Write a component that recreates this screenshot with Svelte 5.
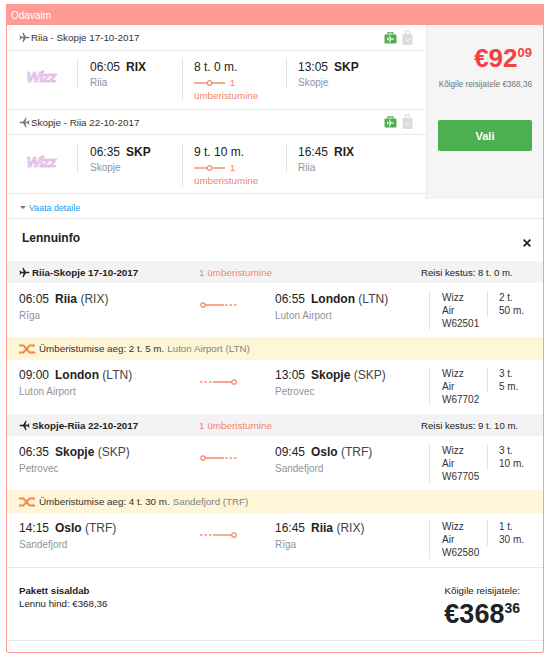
<script>
  const routes = [
    { title: 'Riia - Skopje 17-10-2017', back: false, dep: '06:05', from: 'RIX', fromCity: 'Riia', dur: '8 t. 0 m.', arr: '13:05', to: 'SKP', toCity: 'Skopje' },
    { title: 'Skopje - Riia 22-10-2017', back: true, dep: '06:35', from: 'SKP', fromCity: 'Skopje', dur: '9 t. 10 m.', arr: '16:45', to: 'RIX', toCity: 'Riia' }
  ];

  const trips = [
    {
      title: 'Riia-Skopje 17-10-2017', back: false, total: '8 t. 0 m.',
      legs: [
        { dep: '06:05', from: 'Riia', fromCode: 'RIX', fromPlace: 'Rīga', arr: '06:55', to: 'London', toCode: 'LTN', toPlace: 'Luton Airport', flight: 'W62501', h: '2 t.', m: '50 m.' },
        { dep: '09:00', from: 'London', fromCode: 'LTN', fromPlace: 'Luton Airport', arr: '13:05', to: 'Skopje', toCode: 'SKP', toPlace: 'Petrovec', flight: 'W67702', h: '3 t.', m: '5 m.' }
      ],
      wait: 'Ümberistumise aeg: 2 t. 5 m.', waitPlace: 'Luton Airport (LTN)'
    },
    {
      title: 'Skopje-Riia 22-10-2017', back: true, total: '9 t. 10 m.',
      legs: [
        { dep: '06:35', from: 'Skopje', fromCode: 'SKP', fromPlace: 'Petrovec', arr: '09:45', to: 'Oslo', toCode: 'TRF', toPlace: 'Sandefjord', flight: 'W67705', h: '3 t.', m: '10 m.' },
        { dep: '14:15', from: 'Oslo', fromCode: 'TRF', fromPlace: 'Sandefjord', arr: '16:45', to: 'Riia', toCode: 'RIX', toPlace: 'Rīga', flight: 'W62580', h: '1 t.', m: '30 m.' }
      ],
      wait: 'Ümberistumise aeg: 4 t. 30 m.', waitPlace: 'Sandefjord (TRF)'
    }
  ];

  const planePath = 'M23 12c0-1-1-1.600-2-1.600h-6L9.600 1.500H7.400l2.700 8.900H5L3 7.600H1l1.200 4.400L1 16.400h2l2-2.800h5.100l-2.700 8.900h2.200l5.400-8.900h6c1 0 2-.6 2-1.600z';
</script>

{#snippet plane(color, back)}
  <svg class="plane" class:back viewBox="0 0 24 24" width="11" height="11">
    <path fill={color} d={planePath} />
  </svg>
{/snippet}

<div class="card">
  <div class="card-head">Odavaim</div>

  <div class="offer">
    <div class="routes">
      {#each routes as r}
        <div class="route-head">
          {@render plane('#6f777c', r.back)}
          <span class="route-title">{r.title}</span>
          <span class="bags">
            <svg width="13" height="12" viewBox="0 0 13 12">
              <path d="M4 2.500V.8h5v1.700" fill="none" stroke="#4caf50" stroke-width="1.200" />
              <rect x="0.500" y="2.500" width="12" height="9" rx="1" fill="#4caf50" />
              <path fill="#fff" transform="translate(2.500 3) scale(.33)" d={planePath} />
            </svg>
            <svg width="11" height="16" viewBox="0 0 11 16">
              <path d="M3.500 4V.8h4V4" fill="none" stroke="#d8d8d8" stroke-width="1" />
              <rect x="0.500" y="4" width="10" height="11" rx="1" fill="#dcdcdc" />
              <path d="M3.500 10l1.500 1.300 2.500-2.600" stroke="#fff" stroke-width="1" fill="none" />
            </svg>
          </span>
        </div>
        <div class="route-row">
          <div class="logo-cell"><span class="wizz">Wizz</span></div>
          <div class="stop">
            <div class="time">{r.dep}<b>{r.from}</b></div>
            <div class="city">{r.fromCity}</div>
          </div>
          <div class="stop duration">
            <div class="time">{r.dur}</div>
            <div class="changes">
              <svg width="31" height="6" viewBox="0 0 31 6">
                <path d="M0 3h13M18 3h13" stroke="#f5916f" stroke-width="1.500" />
                <circle cx="15.500" cy="3" r="2.300" fill="none" stroke="#f5916f" stroke-width="1.300" />
              </svg>
              <span class="one">1</span>
              <div>ümberistumine</div>
            </div>
          </div>
          <div class="stop arrival">
            <div class="time">{r.arr}<b>{r.to}</b></div>
            <div class="city">{r.toCity}</div>
          </div>
        </div>
      {/each}
    </div>

    <aside class="side">
      <div class="price">€92<sup>09</sup></div>
      <div class="all">Kõigile reisijatele €368,36</div>
      <button class="pick">Vali</button>
    </aside>
  </div>

  <div class="details">
    <span class="caret"></span><span class="details-link">Vaata detaile</span>
  </div>

  <div class="info-head">
    <h3>Lennuinfo</h3>
    <svg class="close" width="8" height="8" viewBox="0 0 8 8">
      <path d="M.7.7l6.600 6.600M7.300.7L.7 7.300" stroke="#222" stroke-width="1.800" />
    </svg>
  </div>

  {#each trips as t}
    <div class="trip-head">
      <div class="trip-title">
        {@render plane('#222', t.back)}
        <b>{t.title}</b>
      </div>
      <span class="trip-changes">1 ümberistumine</span>
      <span class="trip-total">Reisi kestus: {t.total}</span>
    </div>

    {#each t.legs as leg, i}
      <div class="leg" class:first={i === 0}>
        <div class="leg-stop">
          <div class="leg-time">{leg.dep}<span class="leg-name"><b>{leg.from}</b> ({leg.fromCode})</span></div>
          <div class="leg-city">{leg.fromPlace}</div>
        </div>
        <div class="leg-line">
          <svg width="37" height="8" viewBox="0 0 37 8">
            {#if i === 0}
              <circle cx="3" cy="4" r="2.200" fill="none" stroke="#f5916f" stroke-width="1.300" />
              <path d="M5 4h19" stroke="#f5916f" stroke-width="1.600" />
              <path d="M25 4h12" stroke="#f5916f" stroke-width="1.600" stroke-dasharray="2.500 2" />
            {:else}
              <path d="M0 4h12" stroke="#f5916f" stroke-width="1.600" stroke-dasharray="2.500 2" />
              <path d="M13 4h19" stroke="#f5916f" stroke-width="1.600" />
              <circle cx="34" cy="4" r="2.200" fill="none" stroke="#f5916f" stroke-width="1.300" />
            {/if}
          </svg>
        </div>
        <div class="leg-stop">
          <div class="leg-time">{leg.arr}<span class="leg-name"><b>{leg.to}</b> ({leg.toCode})</span></div>
          <div class="leg-city">{leg.toPlace}</div>
        </div>
        <div class="carrier">Wizz<br />Air<br />{leg.flight}</div>
        <div class="flight-time">{leg.h}<br />{leg.m}</div>
      </div>
      {#if i === 0}
        <div class="wait">
          <svg width="17" height="10" viewBox="0 0 17 10">
            <path d="M0 1.500h4.500l6 7H15M0 8.500h4.500l6-7H15" fill="none" stroke="#f58a4b" stroke-width="2" />
            <path d="M14 0l3 1.500-3 1.500zM14 7l3 1.500-3 1.500z" fill="#f58a4b" />
          </svg>
          <span>{t.wait}</span>
          <span class="wait-place">{t.waitPlace}</span>
        </div>
      {/if}
    {/each}
  {/each}

  <div class="summary">
    <div class="includes">
      <b>Pakett sisaldab</b>
      <div>Lennu hind: €368,36</div>
    </div>
    <div class="sum">
      <div class="sum-label">Kõigile reisijatele:</div>
      <div class="sum-price">€368<sup>36</sup></div>
    </div>
  </div>
</div>

<style>
  :global(body) {
    background: #fff;
    font-family: "Liberation Sans", Arial, sans-serif;
    color: #222;
  }
  .card {
    box-sizing: border-box;
    width: 538px;
    height: 649px;
    margin: 4px 0 0 6px;
    border: 1px solid #ff9b95;
    border-top: 0;
    border-radius: 0 0 3px 3px;
    font-size: 11px;
    overflow: hidden;
  }
  .card-head {
    height: 21px;
    margin: 0 -1px;
    padding-left: 5px;
    background: #ff9b95;
    color: #fff;
    font-size: 10px;
    line-height: 23px;
  }
  .offer {
    display: flex;
    height: 174px;
  }
  .routes {
    width: 419px;
    flex-shrink: 0;
  }
  .route-head {
    box-sizing: border-box;
    height: 25px;
    padding: 0 13px 0 12px;
    display: flex;
    align-items: center;
    border-bottom: 1px solid #e8e8e8;
    font-size: 9.800px;
    color: #333;
  }
  .route-head:first-child {
    height: 26px;
  }
  .plane {
    flex-shrink: 0;
    margin-right: 1px;
  }
  .plane.back {
    transform: scaleX(-1);
  }
  .route-title {
    flex: 1;
  }
  .bags {
    display: flex;
    align-items: center;
    gap: 5px;
  }
  .route-row {
    box-sizing: border-box;
    height: 59px;
    display: flex;
    padding-top: 8px;
    border-bottom: 1px solid #e8e8e8;
  }
  .route-head:first-child + .route-row {
    padding-top: 7px;
  }
  .logo-cell {
    width: 71px;
    height: 30px;
    box-sizing: border-box;
    border-right: 1px solid #e3e3e3;
    display: flex;
    justify-content: center;
    align-items: center;
    padding-top: 6px;
    padding-right: 2px;
  }
  .wizz {
    font-style: italic;
    font-weight: 700;
    font-size: 15px;
    letter-spacing: -1px;
    color: #efdcf2;
    -webkit-text-stroke: 0.5px #d19ad2;
  }
  .stop {
    box-sizing: border-box;
    padding-left: 11px;
    padding-top: 1px;
  }
  .stop:nth-child(2) {
    width: 104px;
    padding-left: 12px;
  }
  .duration {
    width: 104px;
    height: 43px;
    border-left: 1px solid #e3e3e3;
  }
  .arrival {
    height: 30px;
    border-left: 1px solid #e3e3e3;
  }
  .time {
    font-size: 12px;
    line-height: 16px;
  }
  .time b {
    margin-left: 6px;
  }
  .city {
    margin-top: 1px;
    font-size: 10px;
    line-height: 13px;
    color: #8f9498;
  }
  .changes {
    font-size: 9.800px;
    line-height: 13px;
    color: #f5846a;
    margin-top: 1px;
  }
  .changes svg {
    vertical-align: 0;
  }
  .one {
    margin-left: 2px;
  }
  .side {
    flex: 1;
    box-sizing: border-box;
    background: #f5f5f5;
    border-left: 1px solid #e8e8e8;
    padding: 19px 11px 0;
    text-align: right;
  }
  .price {
    font-size: 26px;
    font-weight: 700;
    line-height: 28px;
    color: #f5403f;
  }
  .price sup {
    font-size: 13px;
    line-height: 0;
    vertical-align: 10px;
  }
  .all {
    margin-top: 7px;
    font-size: 8.200px;
    line-height: 12px;
    color: #6f7478;
    white-space: nowrap;
  }
  .pick {
    display: block;
    width: 94px;
    height: 31px;
    margin: 29px 0 0;
    padding: 0;
    border: 0;
    border-radius: 2px;
    background: #4caf50;
    color: #fff;
    font: 700 11px "Liberation Sans", sans-serif;
  }
  .details {
    box-sizing: border-box;
    height: 20px;
    padding: 0 0 2px 13px;
    border-bottom: 1px solid #e8e8e8;
    display: flex;
    align-items: center;
    font-size: 8.900px;
  }
  .caret {
    width: 0;
    height: 0;
    margin-right: 3px;
    border: 3px solid transparent;
    border-top-color: #777;
    border-bottom: 0;
  }
  .details-link {
    color: #1e9bf0;
  }
  .info-head {
    height: 42px;
    padding: 0 12px 0 15px;
    display: flex;
    justify-content: space-between;
    align-items: flex-start;
  }
  .info-head h3 {
    margin: 11px 0 0;
    font-size: 12px;
    line-height: 16px;
  }
  .close {
    margin-top: 20px;
  }
  .trip-head {
    height: 22px;
    padding-left: 12px;
    display: grid;
    grid-template-columns: 180px 222px auto;
    align-items: center;
    background: #f3f3f3;
    font-size: 9.900px;
  }
  .trip-title {
    display: flex;
    align-items: center;
    gap: 1px;
    font-size: 9.800px;
  }
  .trip-changes {
    color: #f5846a;
  }
  .trip-total {
    font-size: 9.600px;
  }
  .leg {
    box-sizing: border-box;
    height: 54px;
    padding: 7px 0 0 12px;
    display: grid;
    grid-template-columns: 181px 75px 154px 58px 1fr;
  }
  .leg.first {
    padding-top: 8px;
  }
  .leg-time {
    font-size: 12px;
    line-height: 16px;
  }
  .leg-name {
    margin-left: 6px;
    color: #444;
  }
  .leg-name b {
    color: #222;
  }
  .leg-city {
    margin-top: 2px;
    font-size: 10px;
    line-height: 13px;
    color: #8f9498;
  }
  .leg-line {
    padding-top: 11px;
    line-height: 0;
  }
  .leg.first .leg-line {
    padding-top: 10px;
  }
  .carrier,
  .flight-time {
    box-sizing: border-box;
    font-size: 10px;
    line-height: 13px;
    color: #333;
    padding-left: 12px;
    border-left: 1px solid #e3e3e3;
  }
  .carrier {
    height: 39px;
  }
  .flight-time {
    height: 26px;
    padding-left: 11px;
  }
  .wait {
    height: 23px;
    padding-left: 12px;
    display: flex;
    align-items: center;
    gap: 3px;
    background: #fff5d7;
    font-size: 9.800px;
    color: #333;
  }
  .wait-place {
    color: #7f8488;
  }
  .summary {
    box-sizing: border-box;
    height: 74px;
    padding: 16px 23px 0 12px;
    display: flex;
    justify-content: space-between;
    border-top: 1px solid #e8e8e8;
    border-bottom: 1px solid #e8e8e8;
    font-size: 9.700px;
    line-height: 13px;
  }
  .sum {
    text-align: right;
  }
  .sum-price {
    margin-top: 3px;
    font-size: 27px;
    font-weight: 700;
    line-height: 28px;
  }
  .sum-price sup {
    font-size: 14px;
    line-height: 0;
    vertical-align: 10px;
  }
</style>
